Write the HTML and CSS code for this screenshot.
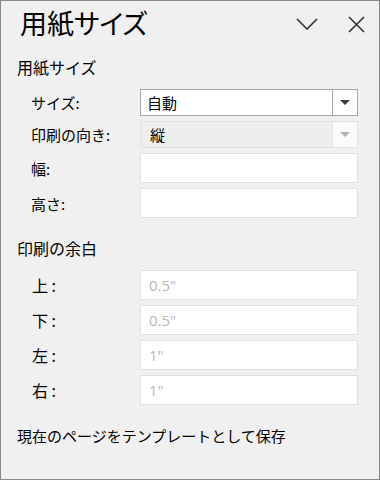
FILE: index.html
```html
<!DOCTYPE html>
<html lang="ja">
<head>
<meta charset="utf-8">
<link rel="stylesheet" href="styles.css">
</head>
<body>
<div class="panel">
  <div class="header">
    <div class="title">用紙サイズ</div>
    <svg class="icon-chevron" width="22" height="12" viewBox="0 0 22 12"><polyline points="1,1 11,11 21,1" fill="none" stroke="#333" stroke-width="1.6"/></svg>
    <svg class="icon-close" width="17" height="17" viewBox="0 0 17 17"><path d="M1 1 L16 16 M16 1 L1 16" fill="none" stroke="#333" stroke-width="1.6"/></svg>
  </div>

  <div class="section-title first">用紙サイズ</div>
  <div class="form">
    <div class="label">サイズ:</div>
    <div class="select">
      <div class="select-value">自動</div>
      <div class="select-arrow"><span class="tri"></span></div>
    </div>
    <div class="label">印刷の向き:</div>
    <div class="select disabled">
      <div class="select-value">縦</div>
      <div class="select-arrow"><span class="tri"></span></div>
    </div>
    <div class="label">幅:</div>
    <div class="input"></div>
    <div class="label">高さ:</div>
    <div class="input"></div>
  </div>

  <div class="section-title second">印刷の余白</div>
  <div class="form margins">
    <div class="label">上 :</div>
    <div class="input"><span class="ph">0.5"</span></div>
    <div class="label">下 :</div>
    <div class="input"><span class="ph">0.5"</span></div>
    <div class="label">左 :</div>
    <div class="input"><span class="ph">1"</span></div>
    <div class="label">右 :</div>
    <div class="input"><span class="ph">1"</span></div>
  </div>

  <div class="footer-link">現在のページをテンプレートとして保存</div>
</div>
</body>
</html>
```

FILE: styles.css
```css
* { box-sizing: border-box; }
html, body { margin: 0; padding: 0; }
body {
  font-family: "Noto Sans CJK JP", "Noto Sans", sans-serif;
  color: #000;
  background: #f0f0f0;
}
.panel {
  width: 380px;
  height: 480px;
  border: 1px solid #8a8a8a;
  background: #f0f0f0;
  display: flex;
  flex-direction: column;
}
.header {
  height: 44px;
  display: flex;
  align-items: center;
  padding-left: 19px;
  padding-right: 14px;
}
.title {
  flex: 1;
  font-size: 27px;
  line-height: 30px;
  font-feature-settings: "palt";
}
.icon-chevron { display: block; margin-right: 30px; margin-top: 2px; }
.icon-close { display: block; margin-top: 2px; }

.section-title {
  font-size: 16px;
  line-height: 24px;
  padding-left: 16px;
}
.section-title.first { margin-top: 10px; }
.section-title.second { margin-top: 18px; }

.form {
  margin-top: 10px;
  display: grid;
  grid-template-columns: 109px 218px;
  grid-auto-rows: 30px;
  grid-template-rows: 27px 27px 30px 30px;
  row-gap: 5px;
  padding-left: 30px;
}
.form.margins { grid-template-rows: 30px 30px 30px 30px; }
.label {
  font-size: 15px;
  display: flex;
  align-items: center;
}
.margins .label { font-size: 16px; padding-left: 1px; }

.select {
  display: flex;
  background: #fff;
  border: 1px solid #a9a9a9;
}
.select-value {
  flex: 1;
  display: flex;
  align-items: center;
  padding-left: 6px;
  font-size: 15px;
}
.select-arrow {
  width: 25px;
  border-left: 1px solid #a9a9a9;
  display: flex;
  align-items: center;
  justify-content: center;
}
.tri {
  width: 0;
  height: 0;
  border-left: 5px solid transparent;
  border-right: 5px solid transparent;
  border-top: 5px solid #3c3c3c;
}
.select.disabled {
  background: #eeeeee;
  border-color: #e2e2e2;
}
.select.disabled .select-value { padding-left: 9px; }
.select.disabled .select-arrow {
  background: #fbfbfb;
  border-left-color: #e6e6e6;
}
.select.disabled .tri { border-top-color: #b2b2b2; }

.input {
  background: #fff;
  border: 1px solid #e0e0e0;
  display: flex;
  align-items: center;
  padding-left: 8px;
}
.ph {
  color: #b8b8b8;
  font-family: "Open Sans", "Noto Sans", sans-serif;
  font-size: 15px;
}

.footer-link {
  margin-top: 19px;
  padding-left: 16px;
  font-size: 15px;
  line-height: 24px;
}
```
